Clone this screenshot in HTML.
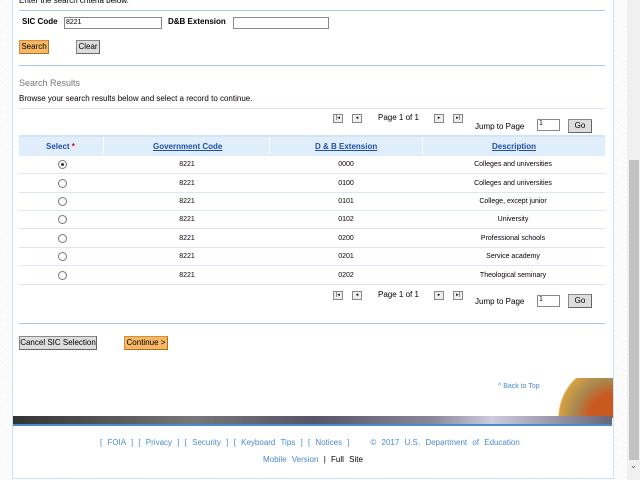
<!DOCTYPE html><html><head><style>
body{margin:0;width:640px;height:480px;overflow:hidden;position:relative;font-family:"Liberation Sans",Verdana,sans-serif;font-size:8px;color:#000;background:repeating-linear-gradient(45deg,#f4f4f4 0 1px,#fff 1px 3px)}
.a{position:absolute}
.c{position:absolute;left:12px;top:0;width:600px;height:478px;background:#fff;border:1px solid #cfe0f0;border-top:none}
.hl{position:absolute;height:1px;background:#a9c8e8}
.btn{position:absolute;border:1px solid #888;border-right-color:#666;border-bottom-color:#666;background:#ddd;font-size:8px;line-height:12px;text-align:center}
.or{background:#f7b866;border-color:#d09040 #b07020 #b07020 #d09040}
.lnk{color:#1f4fa8;text-decoration:underline;font-weight:bold}
.row{position:absolute;left:19px;width:586px;height:18px;border-bottom:1px solid #dbe7f4;font-size:7px}
.row span{position:absolute;top:6px;transform:translateX(-50%)}
.rad{position:absolute;left:39px;top:5px;width:7px;height:7px;border:1px solid #777;border-radius:50%;background:#fff}
.nav{position:absolute;width:8px;height:7px;border:1px solid #888;background:#eee;font-size:5px;line-height:7px;text-align:center}
</style></head><body>
<div class="c"></div>
<div class="a" style="left:627px;top:0;width:13px;height:480px;background:#f0f0f0"></div>
<div class="a" style="left:629px;top:160px;width:10px;height:300px;background:#c2c2c2"></div>
<div class="a" style="left:630px;top:461px;font-size:8px;color:#555">&#8964;</div>
<div class="a" style="left:19px;top:-4px;">Enter the search criteria below.</div>
<div class="hl" style="left:19px;top:10px;width:586px"></div>
<div class="a" style="left:22px;top:17px;font-weight:bold">SIC Code</div>
<div class="a" style="left:64px;top:17px;width:95px;height:10px;border:1px solid #888;font-size:7px;line-height:10px;padding-left:1px">8221</div>
<div class="a" style="left:168px;top:17px;font-weight:bold">D&amp;B Extension</div>
<div class="a" style="left:233px;top:17px;width:94px;height:10px;border:1px solid #888"></div>
<div class="btn or" style="left:19px;top:40px;width:28px">Search</div>
<div class="btn" style="left:76px;top:40px;width:22px">Clear</div>
<div class="hl" style="left:19px;top:65px;width:586px"></div>
<div class="a" style="left:19px;top:78px;color:#777;font-size:9px">Search Results</div>
<div class="a" style="left:19px;top:94px">Browse your search results below and select a record to continue.</div>
<div class="hl" style="left:19px;top:108px;width:586px;background:#dbe7f4"></div>
<div class="nav" style="left:333px;top:114px">|◂</div><div class="nav" style="left:352px;top:114px">◂</div>
<div class="a" style="left:378px;top:113px">Page 1 of 1</div>
<div class="nav" style="left:434px;top:114px">▸</div><div class="nav" style="left:453px;top:114px">▸|</div>
<div class="a" style="left:475px;top:122px">Jump to Page</div>
<div class="a" style="left:537px;top:119px;width:20px;height:10px;border:1px solid #888;font-size:7px;padding-left:1px">1</div>
<div class="btn" style="left:568px;top:119px;width:22px">Go</div>
<div class="a" style="left:19px;top:135px;width:586px;height:19px;background:#dfeefa;border-top:2px solid #d0e4f4"></div>
<div class="a" style="left:103px;top:137px;width:1px;height:17px;background:#fff"></div>
<div class="a" style="left:269px;top:137px;width:1px;height:17px;background:#fff"></div>
<div class="a" style="left:422px;top:137px;width:1px;height:17px;background:#fff"></div>
<div class="a lnk" style="left:46px;top:142px;text-decoration:none">Select <span style="color:#d00">*</span></div>
<div class="a lnk" style="left:153px;top:142px">Government Code</div>
<div class="a lnk" style="left:315px;top:142px">D &amp; B Extension</div>
<div class="a lnk" style="left:492px;top:142px">Description</div>
<div class="row" style="top:155px"><div class="rad"><div style="margin:2px;width:3px;height:3px;border-radius:50%;background:#333"></div></div><span style="left:168px">8221</span><span style="left:327px">0000</span><span style="left:494px">Colleges and universities</span></div>
<div class="row" style="top:174px"><div class="rad"></div><span style="left:168px">8221</span><span style="left:327px">0100</span><span style="left:494px">Colleges and universities</span></div>
<div class="row" style="top:192px"><div class="rad"></div><span style="left:168px">8221</span><span style="left:327px">0101</span><span style="left:494px">College, except junior</span></div>
<div class="row" style="top:210px"><div class="rad"></div><span style="left:168px">8221</span><span style="left:327px">0102</span><span style="left:494px">University</span></div>
<div class="row" style="top:229px"><div class="rad"></div><span style="left:168px">8221</span><span style="left:327px">0200</span><span style="left:494px">Professional schools</span></div>
<div class="row" style="top:247px"><div class="rad"></div><span style="left:168px">8221</span><span style="left:327px">0201</span><span style="left:494px">Service academy</span></div>
<div class="row" style="top:266px"><div class="rad"></div><span style="left:168px">8221</span><span style="left:327px">0202</span><span style="left:494px">Theological seminary</span></div>
<div class="nav" style="left:333px;top:291px">|◂</div><div class="nav" style="left:352px;top:291px">◂</div>
<div class="a" style="left:378px;top:290px">Page 1 of 1</div>
<div class="nav" style="left:434px;top:291px">▸</div><div class="nav" style="left:453px;top:291px">▸|</div>
<div class="a" style="left:475px;top:297px">Jump to Page</div>
<div class="a" style="left:537px;top:295px;width:20px;height:10px;border:1px solid #888;font-size:7px;padding-left:1px">1</div>
<div class="btn" style="left:568px;top:294px;width:22px">Go</div>
<div class="hl" style="left:19px;top:323px;width:586px"></div>
<div class="btn" style="left:19px;top:336px;width:76px">Cancel SIC Selection</div>
<div class="btn or" style="left:124px;top:336px;width:42px">Continue &gt;</div>
<div class="a" style="left:498px;top:383px;color:#4a8ad0;font-size:7px">^ Back to Top</div>
<div class="a" style="left:545px;top:378px;width:68px;height:40px;background:radial-gradient(circle at 100% 100%,#c85a20 0 30%,#a88a50 50%,#d8a040 68%,transparent 70%)"></div>
<div class="a" style="left:13px;top:416px;width:599px;height:8px;background:linear-gradient(90deg,#333,#777 30%,#556 50%,#889 70%,#ccd 80%,#667)"></div>
<div class="a" style="left:13px;top:424px;width:599px;height:2px;background:#4a8ad0"></div>
<div class="a" style="left:100px;top:438px;color:#4a8ad0;word-spacing:3px">[ FOIA ] [ Privacy ] [ Security ] [ Keyboard Tips ] [ Notices ] &nbsp;&nbsp; © 2017 U.S. Department of Education</div>
<div class="a" style="left:263px;top:455px;word-spacing:3px"><span style="color:#4a8ad0">Mobile Version</span> | Full Site</div>
</body></html>
